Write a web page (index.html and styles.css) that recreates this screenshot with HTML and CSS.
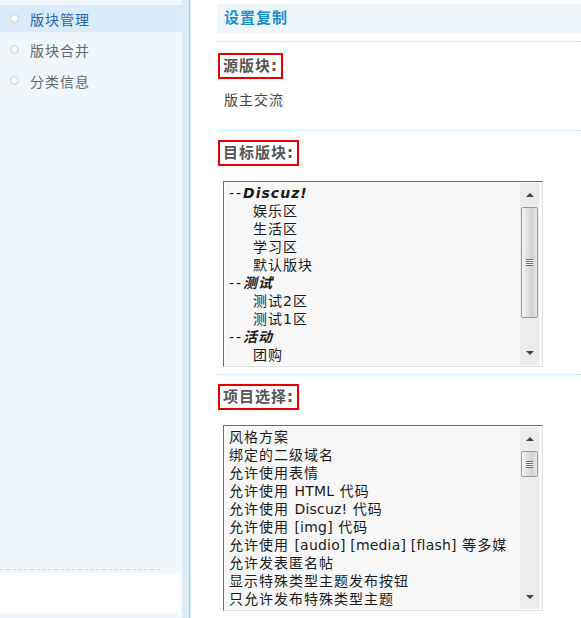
FILE: index.html
```html
<!DOCTYPE html>
<html lang="zh-CN">
<head>
<meta charset="utf-8">
<title>设置复制</title>
<link rel="stylesheet" href="styles.css">
</head>
<body>
<div class="page">
  <aside class="side">
    <ul class="menu">
      <li class="item active"><span class="dot"></span>版块管理</li>
      <li class="item"><span class="dot"></span>版块合并</li>
      <li class="item"><span class="dot"></span>分类信息</li>
    </ul>
    <div class="side-foot">
      <div class="side-rule"></div>
      <div class="side-box"></div>
    </div>
  </aside>
  <div class="side-edge"></div>
  <div class="side-line"></div>
  <main class="main">
    <div class="head"><h2 class="head-title">设置复制</h2></div>

    <section class="sec sec-src">
      <div class="label">源版块:</div>
      <p class="src-name">版主交流</p>
    </section>

    <section class="sec">
      <div class="label">目标版块:</div>
      <div class="listbox">
        <div class="opts">
          <div class="opt"><span class="dash">--</span><span class="grp-name">Discuz!</span></div>
          <div class="opt sub">娱乐区</div>
          <div class="opt sub">生活区</div>
          <div class="opt sub">学习区</div>
          <div class="opt sub">默认版块</div>
          <div class="opt"><span class="dash">--</span><span class="grp-name">测试</span></div>
          <div class="opt sub">测试2区</div>
          <div class="opt sub">测试1区</div>
          <div class="opt"><span class="dash">--</span><span class="grp-name">活动</span></div>
          <div class="opt sub">团购</div>
        </div>
        <div class="sbar">
          <div class="sbtn"><span class="tri-up"></span></div>
          <div class="track"><div class="thumb thumb-long"><span class="grip"></span></div></div>
          <div class="sbtn"><span class="tri-down"></span></div>
        </div>
      </div>
    </section>

    <section class="sec sec-last">
      <div class="label">项目选择:</div>
      <div class="listbox">
        <div class="opts">
          <div class="opt">风格方案</div>
          <div class="opt">绑定的二级域名</div>
          <div class="opt">允许使用表情</div>
          <div class="opt">允许使用 <span class="lat">HTML</span> 代码</div>
          <div class="opt">允许使用 <span class="lat">Discuz!</span> 代码</div>
          <div class="opt">允许使用 <span class="lat">[img]</span> 代码</div>
          <div class="opt">允许使用 <span class="lat">[audio] [media] [flash]</span> 等多媒</div>
          <div class="opt">允许发表匿名帖</div>
          <div class="opt">显示特殊类型主题发布按钮</div>
          <div class="opt">只允许发布特殊类型主题</div>
        </div>
        <div class="sbar">
          <div class="sbtn"><span class="tri-up"></span></div>
          <div class="track"><div class="thumb thumb-short"><span class="grip"></span></div></div>
          <div class="sbtn"><span class="tri-down"></span></div>
        </div>
      </div>
    </section>
  </main>
</div>
</body>
</html>
```

FILE: styles.css
```css
* { box-sizing: border-box; }
html, body { margin: 0; height: 100%; }
body {
  font-family: "DejaVu Sans", "Noto Sans CJK SC", sans-serif;
  font-size: 14px;
  color: #333;
  background: #fff;
  overflow: hidden;
}
.page { display: flex; height: 618px; }

/* sidebar */
.side {
  width: 182px;
  flex: none;
  background: #eff7fc;
  display: flex;
  flex-direction: column;
  padding: 5px 0 5px;
}
.menu { list-style: none; margin: 0; padding: 0; }
.item {
  height: 27px;
  margin-bottom: 4px;
  display: flex;
  align-items: center;
  padding-left: 10px;
  color: #666;
  letter-spacing: 1px;
}
.item.active { background: #dbeaf8; color: #2467ad; }
.dot {
  width: 9px;
  height: 9px;
  border-radius: 50%;
  border: 1px solid #d0d0d0;
  background: radial-gradient(circle at 40% 40%, #ffffff 0, #ececec 100%);
  margin-right: 11px;
  flex: none;
}
.side-foot { margin-top: auto; }
.side-rule {
  width: 160px;
  height: 1px;
  background: repeating-linear-gradient(90deg, #c6d9e6 0 4px, transparent 4px 6px);
  margin-bottom: 3px;
}
.side-box { height: 40px; width: 181px; background: #fff; }
.side-edge { width: 7px; flex: none; background: #dcebf8; }
.side-line { width: 2px; flex: none; background: linear-gradient(90deg, #a5cadb 50%, #d3e7f0 50%); }

/* main */
.main { flex: 1; min-width: 0; padding: 4px 0 0 26px; }
.head { padding-bottom: 8px; border-bottom: 1px dotted #bcdcf0; }
.head-title {
  margin: 0;
  height: 29px;
  line-height: 29px;
  background: #eff7fc;
  padding-left: 7px;
  font-size: 15px;
  font-weight: bold;
  color: #1b8fc9;
  letter-spacing: 1px;
}
.sec {
  display: flex;
  flex-direction: column;
  align-items: flex-start;
  border-bottom: 1px dotted #bcdcf0;
  padding: 9px 0 7px;
}
.sec-src { padding: 11px 0 20px; }
.sec-last { border-bottom: none; }
.label {
  height: 26px;
  line-height: 22px;
  border: 2px solid #e60000;
  padding: 0 3px;
  margin-left: 1px;
  font-size: 15px;
  font-weight: bold;
  color: #555;
  letter-spacing: 1px;
  white-space: nowrap;
}
.src-name {
  margin: 11px 0 0 7px;
  line-height: 20px;
  color: #444;
  letter-spacing: 1px;
}

/* list boxes */
.listbox {
  margin: 15px 0 0 6px;
  width: 320px;
  height: 186px;
  display: flex;
  border: 1px solid;
  border-color: #6a6a6a #e0e0e0 #e0e0e0 #6a6a6a;
  padding: 1px;
  background: #fcfcfc;
}
.opts {
  flex: 1;
  min-width: 0;
  background: #f7f7f7;
  padding-top: 1px;
  overflow: hidden;
}
.opt {
  height: 18px;
  line-height: 18px;
  white-space: nowrap;
  padding-left: 4px;
  color: #1a1a1a;
  letter-spacing: 1px;
}
.opt.sub { padding-left: 28px; }
.lat { letter-spacing: 0.2px; }
.dash { letter-spacing: 2px; }
.grp-name { font-weight: bold; font-style: italic; }

.sbar {
  width: 19px;
  flex: none;
  margin-right: 2px;
  background: #ececec;
  display: flex;
  flex-direction: column;
}
.sbtn {
  height: 24px;
  flex: none;
  display: flex;
  align-items: center;
  justify-content: center;
}
.tri-up {
  width: 0; height: 0;
  border-left: 4px solid transparent;
  border-right: 4px solid transparent;
  border-bottom: 4px solid #444;
}
.tri-down {
  width: 0; height: 0;
  border-left: 4px solid transparent;
  border-right: 4px solid transparent;
  border-top: 4px solid #444;
}
.track {
  flex: 1;
  display: flex;
  flex-direction: column;
  align-items: center;
}
.thumb {
  width: 17px;
  border: 1px solid #9a9a9a;
  border-radius: 2px;
  background: linear-gradient(90deg, #f6f6f6 0, #e3e3e3 30%, #d3d3d3 70%, #e9e9e9 100%);
  display: flex;
  align-items: center;
  justify-content: center;
}
.thumb-long { height: 111px; }
.thumb-short { height: 26px; }
.grip {
  width: 7px;
  height: 7px;
  background: repeating-linear-gradient(180deg, #6e6e6e 0 1px, #f6f6f6 1px 2px);
}
```
